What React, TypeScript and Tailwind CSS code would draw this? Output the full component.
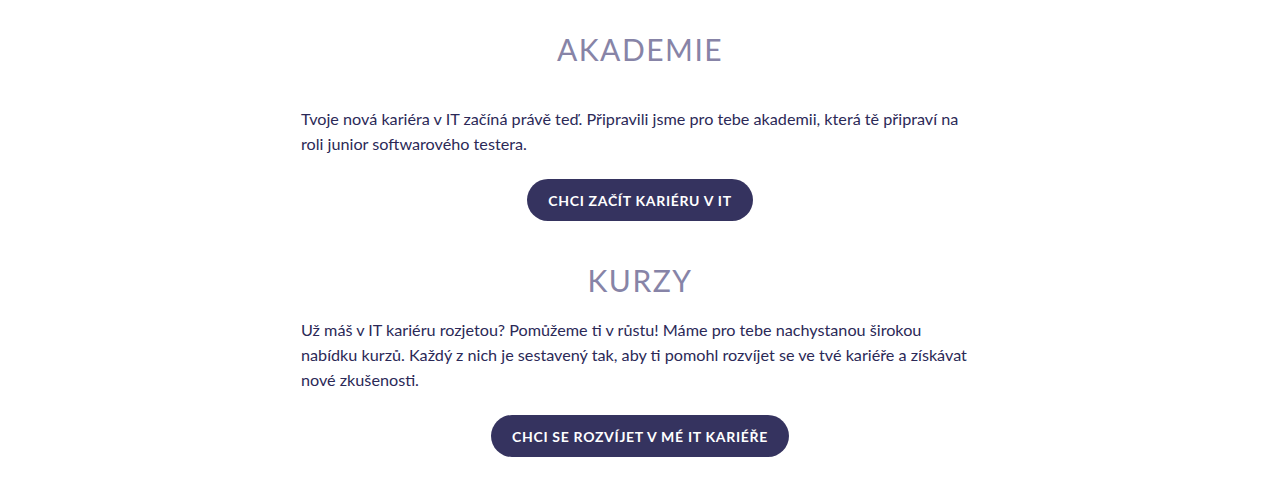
export default function App() {
  const sections = [
    {
      title: "AKADEMIE",
      text: "Tvoje nová kariéra v IT začíná právě teď. Připravili jsme pro tebe akademii, která tě připraví na roli junior softwarového testera.",
      cta: "Chci začít kariéru v IT",
      gap: "mt-[37px]",
    },
    {
      title: "KURZY",
      text: "Už máš v IT kariéru rozjetou? Pomůžeme ti v růstu! Máme pro tebe nachystanou širokou nabídku kurzů. Každý z nich je sestavený tak, aby ti pomohl rozvíjet se ve tvé kariéře a získávat nové zkušenosti.",
      cta: "Chci se rozvíjet v mé IT kariéře",
      gap: "mt-[17px]",
    },
  ]

  return (
    <div className="min-h-[490px] bg-white font-['Lato','Open_Sans',sans-serif]">
      <div className="mx-auto w-[678px] pt-[29px] flex flex-col gap-[39px]">
        {sections.map((s) => (
          <section key={s.title} className="flex flex-col items-center">
            <h2 className="text-[30px] leading-[40px] tracking-[0.05em] text-[#8784a7] font-normal">
              {s.title}
            </h2>
            <p className={`${s.gap} w-full text-[16.2px] leading-[25px] text-[#2b2957]`}>
              {s.text}
            </p>
            <button className="mt-[23px] h-[42px] px-[21px] rounded-full bg-[#35335f] text-white text-[14px] font-bold uppercase tracking-[0.05em]">
              {s.cta}
            </button>
          </section>
        ))}
      </div>
    </div>
  )
}
